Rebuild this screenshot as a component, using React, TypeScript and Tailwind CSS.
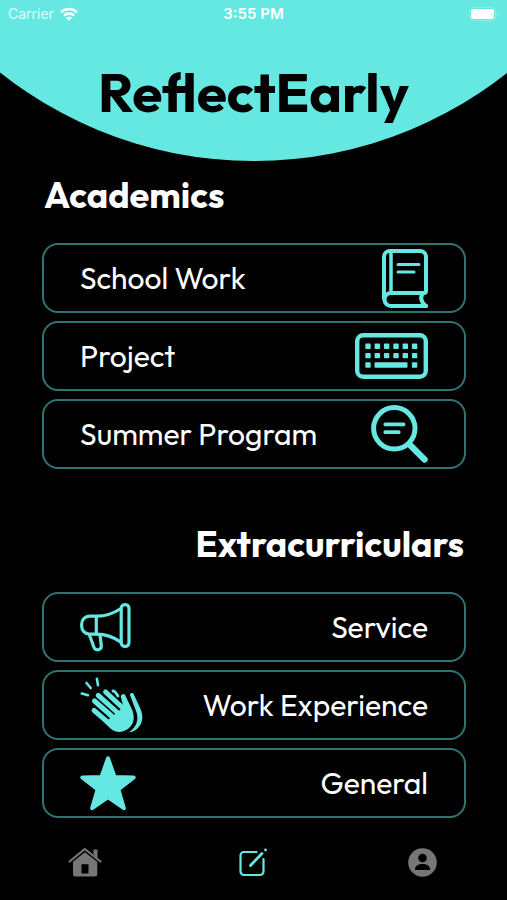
import type { ReactNode } from "react";

const BookIcon = () => (
  <svg width="46" height="59" viewBox="0 0 46 59" fill="none" stroke="currentColor" strokeWidth="4" strokeLinecap="round" strokeLinejoin="round">
    <path d="M2 50V8a6 6 0 0 1 6-6h30a6 6 0 0 1 6 6v34a2 2 0 0 1-2 2H9a6.500 6.500 0 0 0 0 13h35" />
    <path d="M9 3v40" strokeWidth="3.500" />
    <path d="M41 44c-3 4-3 8 3 13" />
    <path d="M16 15.500h21M16 23h16" strokeWidth="3" />
  </svg>
);

const KeyboardIcon = () => (
  <svg width="73" height="46" viewBox="0 0 73 46" fill="currentColor">
    <rect x="2.200" y="2.200" width="68.600" height="41.600" rx="6" fill="none" stroke="currentColor" strokeWidth="4.400" />
    {[13, 22.300, 31.600, 41, 50.300, 59.600].map((x) => (
      <g key={x}>
        <rect x={x - 2.700} y="10.600" width="5.400" height="5.400" rx="0.800" />
        <rect x={x - 2.700} y="19.900" width="5.400" height="5.400" rx="0.800" />
      </g>
    ))}
    <rect x="10.300" y="29.300" width="5.400" height="5.400" rx="0.800" />
    <rect x="19.500" y="29.300" width="33" height="5.400" rx="0.800" />
    <rect x="56.900" y="29.300" width="5.400" height="5.400" rx="0.800" />
  </svg>
);

const SearchIcon = () => (
  <svg width="57" height="58" viewBox="0 0 57 58" fill="none" stroke="currentColor" strokeLinecap="round">
    <circle cx="23.300" cy="23.300" r="20.700" strokeWidth="5" />
    <path d="M38.500 39.500 53.500 54.500" strokeWidth="6.400" />
    <path d="M14.300 19.400h18.200M14.300 27.200h13.400" strokeWidth="3.800" />
  </svg>
);

const MegaphoneIcon = () => (
  <svg width="51" height="49" viewBox="0 0 51 49" fill="none" stroke="currentColor" strokeWidth="3.200" strokeLinecap="round" strokeLinejoin="round">
    <rect x="41.200" y="1.700" width="7.800" height="41.600" rx="3.600" />
    <path d="M41 5.500C34 10 26 13.200 17 13.200H9.500a7.800 7.800 0 0 0-7.800 7.800v2.400a7.800 7.800 0 0 0 7.800 7.800H17c9 0 17 3.300 24 8" />
    <path d="M16.300 13.500v17.500" />
    <path d="M9.500 32 13.800 44c1.800 4.500 8 3.300 7.500-1.500L20 32" />
  </svg>
);

const ClapIcon = () => (
  <svg width="63" height="56" viewBox="0 0 63 56" fill="none" stroke="currentColor" strokeLinecap="round" strokeLinejoin="round">
    <path d="M1.800 16.500 8 18.200M6.500 6l4.200 5M16.900 1.800 18 8.200" strokeWidth="2.600" />
    <path d="M33 14c1.800 0 3.500 2.500 5 5" strokeWidth="2.800" />
    <path d="M14 33.300 31 48M14.500 24 35 42M18.200 18.300 39 37M25.600 15 45 33" strokeWidth="5" />
    <path d="M43.300 19.500 46 31" strokeWidth="4.800" />
    <path d="M28 43 44.500 29c0-3-2-5-1.500-7.500l3-1.500 6 12.500c3.500 9 1.500 15-3.500 19C42 56.500 35 55.500 30.500 51.500L24 45z" fill="currentColor" stroke="none" />
    <path d="M50 18.200c-.5-2.300 2.800-3 4-.5L60.500 32c3 7 2.500 14.500-3 19.500-2.500 2.200-5 3.500-8.500 3.800 7-4.800 10-12 7.500-20z" fill="currentColor" stroke="none" />
  </svg>
);

const StarIcon = () => (
  <svg width="56" height="55" viewBox="0 0 56 55" fill="currentColor" stroke="currentColor" strokeWidth="4" strokeLinejoin="round">
    <path d="M28 2.300 34.500 21 53.700 21.500 38.300 33.300 43.900 52.200 28 41 12.100 52.200 17.700 33.300 2.300 21.500 21.500 21z" />
  </svg>
);

const HomeIcon = () => (
  <svg width="34" height="30" viewBox="0 0 34 30" fill="currentColor">
    <path d="M1.500 14.500 16.800 2 32.500 14.500" fill="none" stroke="currentColor" strokeWidth="2.200" strokeLinecap="round" strokeLinejoin="round" />
    <path d="M25.500 2.500h4V11l-4-3.200z" />
    <path fillRule="evenodd" d="M5 14.800 16.800 5.200 29.300 14.800V27a2.500 2.500 0 0 1-2.500 2.500h-19.300A2.500 2.500 0 0 1 5 27zM13.500 17.200V26.500H20.500V17.200z" />
  </svg>
);

const EditIcon = () => (
  <svg width="29" height="29" viewBox="0 0 29 29" fill="none" stroke="currentColor" strokeWidth="2.200" strokeLinecap="round">
    <path d="M17.500 4H5a3.500 3.500 0 0 0-3.500 3.500v16A3.500 3.500 0 0 0 5 27h16a3.500 3.500 0 0 0 3.500-3.500V11" />
    <path d="M11.500 17.500 23 5.500" strokeWidth="2.800" />
    <path d="M26.500 1.900v.2" strokeWidth="2.800" />
  </svg>
);

const ProfileIcon = () => (
  <svg width="29" height="29" viewBox="0 0 29 29">
    <circle cx="14.500" cy="14.500" r="14.300" fill="currentColor" />
    <circle cx="14.500" cy="10" r="4.300" fill="#000" />
    <path d="M7 22v-1c0-3 3.500-5 7.500-5s7.500 2 7.500 5v1z" fill="#000" />
  </svg>
);

const WifiIcon = () => (
  <svg width="18" height="14" viewBox="0 0 18 14" fill="none" stroke="currentColor" strokeWidth="2.600">
    <path d="M1 5.200c4.500-4.300 11.500-4.300 16 0M4 8.500c3-2.600 7-2.600 10 0" />
    <path d="M9 13.700 6 10.900c1.800-1.500 4.200-1.500 6 0z" fill="currentColor" stroke="none" />
  </svg>
);

const BatteryIcon = () => (
  <svg width="30" height="14" viewBox="0 0 30 14" fill="none">
    <rect x="0.500" y="0.500" width="26" height="13" rx="4" stroke="#fff" strokeOpacity="0.250" />
    <rect x="2" y="2" width="23" height="10" rx="2.500" fill="#fff" />
    <path d="M28 5v4c1.600-.6 1.600-3.400 0-4z" fill="#fff" fillOpacity="0.400" />
  </svg>
);

type Item = { label: string; icon: ReactNode };

const academics: Item[] = [
  { label: "School Work", icon: <BookIcon /> },
  { label: "Project", icon: <KeyboardIcon /> },
  { label: "Summer Program", icon: <SearchIcon /> },
];

const extracurriculars: Item[] = [
  { label: "Service", icon: <MegaphoneIcon /> },
  { label: "Work Experience", icon: <ClapIcon /> },
  { label: "General", icon: <StarIcon /> },
];

const Card = ({ label, icon, reverse }: Item & { reverse?: boolean }) => (
  <button
    type="button"
    className={`flex h-[70px] w-full items-center justify-between rounded-2xl border-2 border-[#2f7471] px-9 text-[30px] leading-9 text-white ${reverse ? "flex-row-reverse" : ""}`}
  >
    <span>{label}</span>
    <span className="text-[#66e8e2]">{icon}</span>
  </button>
);

const Section = ({ title, items, reverse }: { title: string; items: Item[]; reverse?: boolean }) => (
  <section>
    <h2 className={`mb-6 px-0.5 text-4xl leading-12 font-bold text-white ${reverse ? "text-right" : ""}`}>{title}</h2>
    <div className="flex flex-col gap-2">
      {items.map((item) => (
        <Card key={item.label} {...item} reverse={reverse} />
      ))}
    </div>
  </section>
);

export default function App() {
  return (
    <div className="flex min-h-screen flex-col bg-black font-['Outfit','Lato',sans-serif]">
      <header className="relative h-[161px] overflow-hidden">
        <div className="absolute bottom-0 left-1/2 aspect-square w-[161%] -translate-x-1/2 rounded-full bg-[#66e8e2]" />
        <div className="relative grid h-7 grid-cols-3 items-center px-2 font-['Inter',sans-serif] text-sm text-white">
          <div className="flex items-center gap-1.5">
            <span className="opacity-80">Carrier</span>
            <WifiIcon />
          </div>
          <span className="text-center text-[15px] font-semibold">3:55 PM</span>
          <div className="flex justify-end">
            <BatteryIcon />
          </div>
        </div>
        <h1 className="relative mt-8 text-center text-[55px] leading-16 font-bold text-black">ReflectEarly</h1>
      </header>

      <main className="flex flex-col gap-[51px] pt-2.5 pr-[41px] pl-[42px]">
        <Section title="Academics" items={academics} />
        <Section title="Extracurriculars" items={extracurriculars} reverse />
      </main>

      <nav className="mt-auto grid h-[76px] grid-cols-3 items-center justify-items-center text-[#767676]">
        <button type="button" aria-label="Home">
          <HomeIcon />
        </button>
        <button type="button" aria-label="Write" className="text-[#66e8e2]">
          <EditIcon />
        </button>
        <button type="button" aria-label="Profile">
          <ProfileIcon />
        </button>
      </nav>
    </div>
  );
}
